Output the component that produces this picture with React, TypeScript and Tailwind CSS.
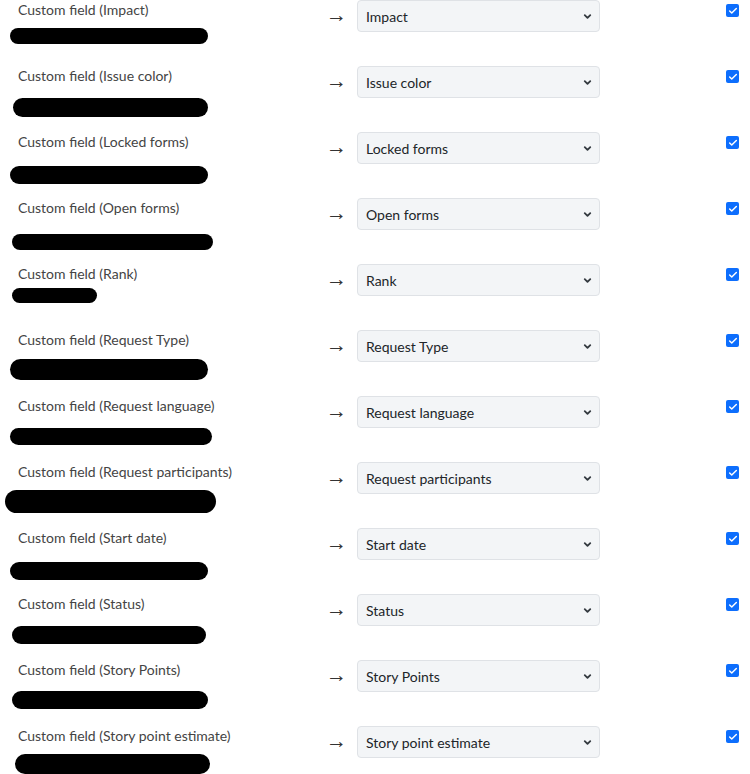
import { Check, ChevronDown } from "lucide-react";

type Row = {
    name: string;
    mark: string;
};

// redaction marks differ per row, so keep their classes here
const rows: Row[] = [
    { name: "Impact", mark: "ml-[-8px] mt-[8px] w-[198px] h-[16px]" },
    { name: "Issue color", mark: "ml-[-5px] mt-[12px] w-[195px] h-[19px]" },
    { name: "Locked forms", mark: "ml-[-8px] mt-[14px] w-[198px] h-[18px]" },
    { name: "Open forms", mark: "ml-[-6px] mt-[16px] w-[201px] h-[16px]" },
    { name: "Rank", mark: "ml-[-6px] mt-[4px] w-[85px] h-[15px]" },
    { name: "Request Type", mark: "ml-[-8px] mt-[9px] w-[198px] h-[21px]" },
    { name: "Request language", mark: "ml-[-8px] mt-[12px] w-[202px] h-[17px]" },
    { name: "Request participants", mark: "ml-[-13px] mt-[8px] w-[211px] h-[23px]" },
    { name: "Start date", mark: "ml-[-8px] mt-[14px] w-[198px] h-[18px]" },
    { name: "Status", mark: "ml-[-6px] mt-[12px] w-[194px] h-[18px]" },
    { name: "Story Points", mark: "ml-[-6px] mt-[11px] w-[196px] h-[18px]" },
    { name: "Story point estimate", mark: "ml-[-3px] mt-[8px] w-[195px] h-[20px]" },
];

function FieldRow({ row }: { row: Row }) {
    return (
        <div className="flex h-[66px] items-start">
            {/* Source column */}
            <div className="w-[310px] pl-[18px] flex flex-col items-start">
                <span className="text-[14px] leading-[20px] text-[#444]">Custom field ({row.name})</span>
                <div className={`bg-black rounded-full ${row.mark}`} />
            </div>

            <span className="w-[47px] pl-[16px] font-['Noto_Sans',sans-serif] text-[21px] leading-[29px] text-[#333]">→</span>

            {/* Target select */}
            <div className="relative w-[243px] h-[32px]">
                <select
                    defaultValue={row.name}
                    className="appearance-none w-full h-full rounded-[4px] border border-[#dfe2e6] bg-[#f3f5f7] pl-[8px] pr-8 text-[14px] text-[#212529] outline-none"
                >
                    <option>{row.name}</option>
                </select>
                <ChevronDown size={11} strokeWidth={4} className="absolute right-[7px] top-[11px] text-[#343a40] pointer-events-none" />
            </div>

            <div className="flex-1 flex justify-end pr-[11px] pt-[4px]">
                <div className="w-[13px] h-[13px] rounded-[2px] bg-[#0d6efd] flex items-center justify-center">
                    <Check size={10} strokeWidth={3.5} className="text-white" />
                </div>
            </div>
        </div>
    );
}

export default function App() {
    return (
        <div className="w-[750px] h-[774px] overflow-hidden bg-white font-['Lato',sans-serif]">
            {rows.map((r) => (
                <FieldRow key={r.name} row={r} />
            ))}
        </div>
    );
}
